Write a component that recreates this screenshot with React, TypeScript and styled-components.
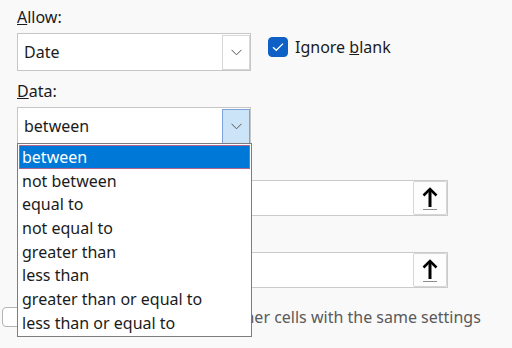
import React from "react";
import styled, { createGlobalStyle } from "styled-components";

const Global = createGlobalStyle`
  html, body { margin: 0; padding: 0; background: #f9f9f9; }
  body {
    font-family: "Noto Sans", "Open Sans", sans-serif;
    font-size: 16px;
    color: #1b1b1b;
    overflow: hidden;
  }
`;

const Page = styled.div`
  position: relative;
  width: 512px;
  height: 348px;
  box-sizing: border-box;
  padding: 6px 0 0 17px;
  display: flex;
  flex-direction: column;
  overflow: hidden;
`;

const Label = styled.div<{ $mt?: number }>`
  height: 22px;
  line-height: 22px;
  margin-top: ${(p) => p.$mt ?? 0}px;
`;

const Row = styled.div<{ $mt?: number }>`
  display: flex;
  align-items: flex-start;
  gap: 17px;
  margin-top: ${(p) => p.$mt ?? 0}px;
`;

const Select = styled.div<{ $mt?: number }>`
  position: relative;
  width: 234px;
  height: 38px;
  box-sizing: border-box;
  margin-top: ${(p) => p.$mt ?? 0}px;
  border: 1px solid #c6c6c6;
  background: #fff;
  display: flex;
  align-items: center;
  padding: 0 0 0 6px;
`;

const SelectValue = styled.span`
  flex: 1;
  line-height: 22px;
`;

const DropButton = styled.div<{ $active?: boolean }>`
  width: 28px;
  height: 35px;
  box-sizing: border-box;
  display: flex;
  align-items: center;
  justify-content: center;
  background: ${(p) => (p.$active ? "#cce4f7" : "#fff")};
  border: 1px solid ${(p) => (p.$active ? "#7fa2da" : "#d7d7d7")};
`;

const CheckLabel = styled.label`
  display: flex;
  align-items: center;
  gap: 7px;
  line-height: 22px;
  margin-top: 3px;
`;

const Box = styled.span<{ $checked?: boolean }>`
  width: 20px;
  height: 20px;
  box-sizing: border-box;
  border-radius: 4px;
  display: flex;
  align-items: center;
  justify-content: center;
  flex: none;
  background: ${(p) => (p.$checked ? "#0f60c6" : "#fff")};
  border: 1px solid ${(p) => (p.$checked ? "#0f60c6" : "#b4b4b4")};
`;

const List = styled.ul`
  position: absolute;
  left: -1px;
  top: 35px;
  width: 235px;
  box-sizing: border-box;
  margin: 0;
  padding: 1px;
  list-style: none;
  background: #fff;
  border: 1px solid #7d7d7d;
  z-index: 5;
`;

const Item = styled.li<{ $selected?: boolean }>`
  height: 23.7px;
  line-height: 25px;
  padding-left: 3px;
  white-space: nowrap;
  color: ${(p) => (p.$selected ? "#fff" : "#1b1b1b")};
  background: ${(p) => (p.$selected ? "#0078d7" : "transparent")};
  box-shadow: ${(p) => (p.$selected ? "inset 0 0 0 1px #ad6590" : "none")};
`;

const Field = styled.div<{ $mt?: number }>`
  width: 431px;
  height: 36px;
  box-sizing: border-box;
  margin-top: ${(p) => p.$mt ?? 0}px;
  border: 1px solid #cbcbcb;
  background: #fff;
  display: flex;
  align-items: center;
  justify-content: flex-end;
`;

const ArrowButton = styled.div`
  width: 34px;
  height: 34px;
  box-sizing: border-box;
  border: 1px solid #d6d6d6;
  border-radius: 2px;
  background: #fdfdfd;
  display: flex;
  align-items: center;
  justify-content: center;
`;

const BottomRow = styled.div`
  display: flex;
  align-items: center;
  gap: 7px;
  margin: 19px 0 0 -15px;
  color: #5a5a5a;
  white-space: nowrap;
  line-height: 20px;
`;

const Chevron = () => (
  <svg width="11" height="7" viewBox="0 0 11 7">
    <polyline points="0.5,0.8 5.5,5.8 10.5,0.8" fill="none" stroke="#555" strokeWidth="1" />
  </svg>
);

const Check = () => (
  <svg width="12" height="10" viewBox="0 0 12 10">
    <polyline points="1,5.2 4.3,8.3 11,1.6" fill="none" stroke="#fff" strokeWidth="1.3" />
  </svg>
);

const UpArrow = () => (
  <svg width="16" height="23" viewBox="0 0 16 23">
    <polyline points="1.5,8.5 8,2 14.5,8.5" fill="none" stroke="#000" strokeWidth="2.6" />
    <line x1="8" y1="2.5" x2="8" y2="20" stroke="#000" strokeWidth="3" />
    <line x1="1" y1="22.5" x2="15" y2="22.5" stroke="#8c8c8c" strokeWidth="1" />
  </svg>
);

const options = [
  "between",
  "not between",
  "equal to",
  "not equal to",
  "greater than",
  "less than",
  "greater than or equal to",
  "less than or equal to",
];

export default function App() {
  return (
    <Page>
      <Global />
      <Label>
        <u>A</u>llow:
      </Label>
      <Row $mt={5}>
        <Select>
          <SelectValue>Date</SelectValue>
          <DropButton>
            <Chevron />
          </DropButton>
        </Select>
        <CheckLabel>
          <Box $checked>
            <Check />
          </Box>
          <span>
            Ignore <u>b</u>lank
          </span>
        </CheckLabel>
      </Row>
      <Label $mt={9}>
        <u>D</u>ata:
      </Label>
      <Select $mt={5}>
        <SelectValue>between</SelectValue>
        <DropButton $active>
          <Chevron />
        </DropButton>
        <List>
          {options.map((o, i) => (
            <Item key={o} $selected={i === 0}>
              {o}
            </Item>
          ))}
        </List>
      </Select>
      <Field $mt={35}>
        <ArrowButton>
          <UpArrow />
        </ArrowButton>
      </Field>
      <Field $mt={36}>
        <ArrowButton>
          <UpArrow />
        </ArrowButton>
      </Field>
      <BottomRow>
        <Box />
        <span>Apply these changes to all other cells with the same settings</span>
      </BottomRow>
    </Page>
  );
}
